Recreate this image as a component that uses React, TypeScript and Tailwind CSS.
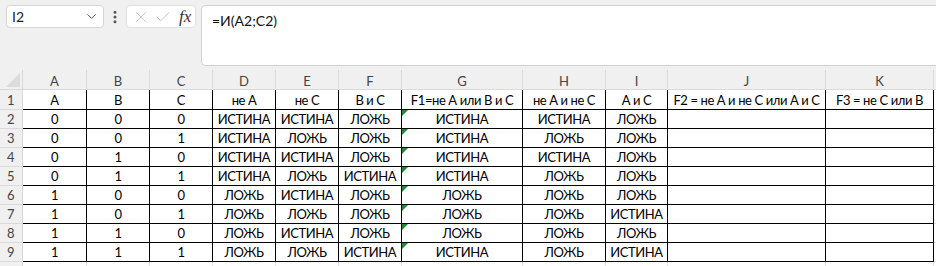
import { ChevronDown, X, Check, EllipsisVertical } from 'lucide-react';

const COLS = ['A', 'B', 'C', 'D', 'E', 'F', 'G', 'H', 'I', 'J', 'K'];

const ROWS: string[][] = [
  ['А', 'В', 'С', 'не А', 'не С', 'В и С', 'F1=не А или В и С', 'не А и не С', 'А и С', 'F2 = не А и не С или А и С', 'F3 = не С или В'],
  ['0', '0', '0', 'ИСТИНА', 'ИСТИНА', 'ЛОЖЬ', 'ИСТИНА', 'ИСТИНА', 'ЛОЖЬ', '', ''],
  ['0', '0', '1', 'ИСТИНА', 'ЛОЖЬ', 'ЛОЖЬ', 'ИСТИНА', 'ЛОЖЬ', 'ЛОЖЬ', '', ''],
  ['0', '1', '0', 'ИСТИНА', 'ИСТИНА', 'ЛОЖЬ', 'ИСТИНА', 'ИСТИНА', 'ЛОЖЬ', '', ''],
  ['0', '1', '1', 'ИСТИНА', 'ЛОЖЬ', 'ИСТИНА', 'ИСТИНА', 'ЛОЖЬ', 'ЛОЖЬ', '', ''],
  ['1', '0', '0', 'ЛОЖЬ', 'ИСТИНА', 'ЛОЖЬ', 'ЛОЖЬ', 'ЛОЖЬ', 'ЛОЖЬ', '', ''],
  ['1', '0', '1', 'ЛОЖЬ', 'ЛОЖЬ', 'ЛОЖЬ', 'ЛОЖЬ', 'ЛОЖЬ', 'ИСТИНА', '', ''],
  ['1', '1', '0', 'ЛОЖЬ', 'ИСТИНА', 'ЛОЖЬ', 'ЛОЖЬ', 'ЛОЖЬ', 'ЛОЖЬ', '', ''],
  ['1', '1', '1', 'ЛОЖЬ', 'ЛОЖЬ', 'ИСТИНА', 'ИСТИНА', 'ЛОЖЬ', 'ИСТИНА', '', ''],
];

function FormulaBar() {
  return (
    <div className="flex items-start h-[70px] pt-[5px]">
      {/* Name box */}
      <div className="ml-[6px] w-[98px] h-[23px] bg-white border border-[#d6d6d6] rounded-[4px] flex items-center justify-between pl-[5px] pr-[4px]">
        <span className="text-[14px] text-[#222]">I2</span>
        <ChevronDown size={15} strokeWidth={1.5} className="text-[#444]" />
      </div>
      <div className="w-[22px] h-[23px] flex items-center justify-center">
        <EllipsisVertical size={16} strokeWidth={2.5} className="text-[#555]" />
      </div>
      {/* Cancel / enter / fx */}
      <div className="w-[70px] h-[23px] bg-white border border-[#e0e0e0] rounded-[4px] flex items-center gap-[4px] pl-[5px]">
        <X size={18} strokeWidth={1} className="text-[#b0b0b0]" />
        <Check size={18} strokeWidth={1} className="text-[#b0b0b0]" />
        <span className="ml-[3px] text-[17px] italic text-[#333] leading-none" style={{ fontFamily: '"Liberation Serif", serif' }}>
          fx
        </span>
      </div>
      {/* Formula input */}
      <div className="ml-[5px] flex-1 h-[61px] bg-white border border-r-0 border-[#d0d0d0] rounded-l-[5px] pl-[10px] pt-[2px]">
        <span className="text-[14px] text-[#111]">=И(A2;C2)</span>
      </div>
    </div>
  );
}

function GreenMark() {
  return (
    <svg className="absolute left-0 top-0" width="6" height="6" viewBox="0 0 6 6">
      <polygon points="0,0 6,0 0,6" fill="#1f8a2f" />
    </svg>
  );
}

export default function App() {
  return (
    <div
      className="w-[936px] h-[266px] overflow-hidden bg-[#f0f0f0]"
      style={{ fontFamily: 'Lato, "Noto Sans", sans-serif' }}
    >
      <FormulaBar />
      <div className="grid grid-cols-[23px_64px_63px_63px_63px_63px_63px_121px_83px_62px_158px_108px_1fr] grid-rows-[20px_20px_repeat(8,19px)_19px]">
        {/* Column header row */}
        <div className="relative border-r border-b border-[#d9d9d9]">
          <svg className="absolute right-[2px] bottom-[2px]" width="14" height="14" viewBox="0 0 14 14">
            <polygon points="14,0 14,14 0,14" fill="#dcdcdc" />
          </svg>
        </div>
        {COLS.map((c) => (
          <div key={c} className="flex items-center justify-center pt-[4px] border-r border-b border-[#dadada] text-[13px] text-[#444]">
            {c}
          </div>
        ))}
        <div className="border-b border-[#dadada]" />

        {/* Data rows */}
        {ROWS.map((row, r) => (
          <div key={r} className="contents">
            <div className="flex items-center pl-[7px] pt-[2px] border-r border-b border-[#dadada] text-[13px] text-[#444]">
              {r + 1}
            </div>
            {row.map((val, c) => (
              <div
                key={c}
                className="relative flex items-center justify-center pt-[2px] bg-white border-r border-b border-black text-[13px] tracking-[-0.4px] text-black whitespace-nowrap overflow-hidden"
              >
                {c === 6 && r > 0 && <GreenMark />}
                {val}
              </div>
            ))}
            <div className="bg-white border-b border-[#e1e1e1]" />
          </div>
        ))}

        {/* Row 10, only its top edge is visible */}
        <div className="border-r border-[#dadada]" />
        {COLS.map((c) => (
          <div key={c} className="bg-white border-r border-[#e1e1e1]" />
        ))}
        <div className="bg-white" />
      </div>
    </div>
  );
}
